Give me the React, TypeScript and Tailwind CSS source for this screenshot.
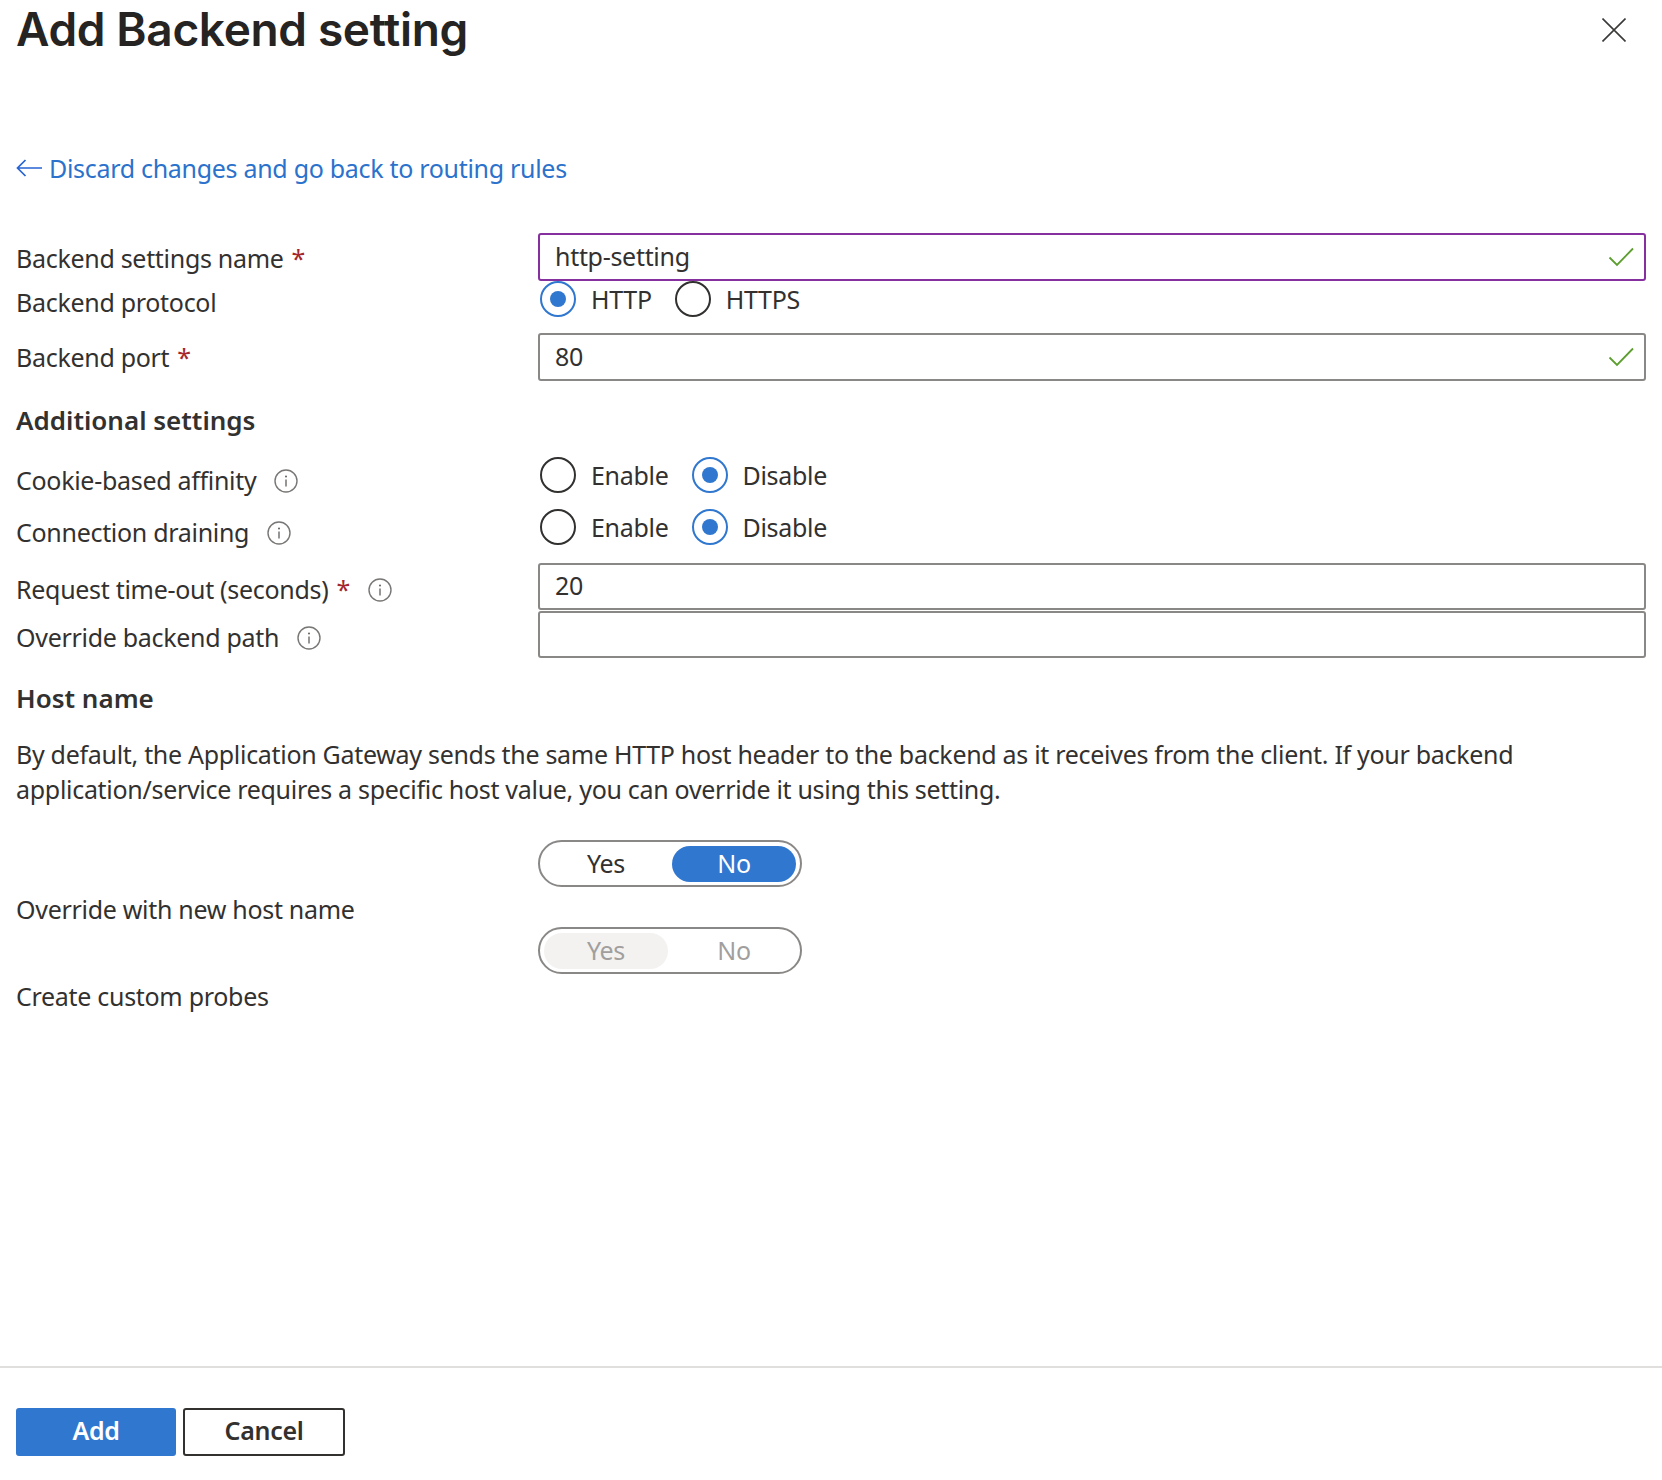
const bodyFont = "font-['Noto_Sans',sans-serif]";

function Required() {
  return <span className="ml-2 text-[#a4262c]">*</span>;
}

function InfoIcon() {
  return (
    <svg className="ml-[18px] shrink-0" width="24" height="24" viewBox="0 0 24 24" fill="none">
      <circle cx="12" cy="12" r="11" stroke="#797775" strokeWidth="1.4" />
      <path d="M12 10.5V17.5" stroke="#605e5c" strokeWidth="1.3" />
      <circle cx="12" cy="7.5" r="1" fill="#605e5c" />
    </svg>
  );
}

function CheckIcon() {
  return (
    <svg className="absolute right-[10px] top-[12px]" width="26" height="20" viewBox="0 0 26 20" fill="none">
      <path d="M1.5 10.5L9 18L25 1.5" stroke="#5c9e2f" strokeWidth="1.8" />
    </svg>
  );
}

function Radio({ label, checked }: { label: string; checked?: boolean }) {
  return (
    <div className="flex items-center gap-[15px]">
      <span
        className={
          checked
            ? "flex size-9 items-center justify-center rounded-full border-2 border-[#3077cf]"
            : "flex size-9 items-center justify-center rounded-full border-2 border-[#323130]"
        }
      >
        {checked && <span className="size-4 rounded-full bg-[#3077cf]" />}
      </span>
      <span>{label}</span>
    </div>
  );
}

function TextBox({ value, focused, valid }: { value?: string; focused?: boolean; valid?: boolean }) {
  return (
    <div
      className={
        focused
          ? "relative flex h-full w-[1108px] items-center rounded-[3px] border-2 border-[#862f9e] px-[15px]"
          : "relative flex h-full w-[1108px] items-center rounded-[3px] border-2 border-[#8a8886] px-[15px]"
      }
    >
      <span className="-translate-y-px">{value}</span>
      {valid && <CheckIcon />}
    </div>
  );
}

function Toggle({ selected, disabled }: { selected: "Yes" | "No"; disabled?: boolean }) {
  const base = "flex h-[36px] w-[124px] items-center justify-center rounded-full";
  return (
    <div className="flex h-[47px] w-[264px] items-center justify-between rounded-full border-2 border-[#8a8886] px-1">
      <div
        className={
          selected === "Yes"
            ? disabled
              ? base + " bg-[#f3f2f1] text-[#a19f9d]"
              : base + " bg-[#3077cf] text-white"
            : disabled
              ? base + " text-[#a19f9d]"
              : base
        }
      >
        Yes
      </div>
      <div
        className={
          selected === "No"
            ? disabled
              ? base + " bg-[#f3f2f1] text-[#a19f9d]"
              : base + " bg-[#3077cf] text-white"
            : disabled
              ? base + " text-[#a19f9d]"
              : base
        }
      >
        No
      </div>
    </div>
  );
}

export default function App() {
  return (
    <div className={`flex h-[1480px] w-[1662px] flex-col overflow-hidden bg-white text-[25px] leading-[35px] tracking-[-0.3px] text-[#323130] ${bodyFont}`}>
      <div className="flex h-[60px] items-center justify-between pl-4 pr-9">
        <h1 className="-translate-y-px font-['Inter',sans-serif] text-[46px] leading-[60px] font-semibold tracking-[-0.35px] text-[#252423]">
          Add Backend setting
        </h1>
        <svg width="24" height="24" viewBox="0 0 24 24" fill="none">
          <path d="M0.5 0.5L23.5 23.5M23.5 0.5L0.5 23.5" stroke="#3b3a39" strokeWidth="1.6" />
        </svg>
      </div>

      <div className="mt-[90px] flex h-[36px] items-center gap-[7px] px-4 text-[#2b72cc]">
        <svg width="26" height="18" viewBox="0 0 26 18" fill="none">
          <path d="M26 9H1.5M9.5 1L1.5 9L9.5 17" stroke="#2563d4" strokeWidth="1.7" />
        </svg>
        <span>Discard changes and go back to routing rules</span>
      </div>

      <div className="mt-[47px] flex h-[48px] px-4">
        <div className="flex w-[522px] items-center pt-[2px]">
          Backend settings name
          <Required />
        </div>
        <TextBox value="http-setting" focused valid />
      </div>

      <div className="flex h-[52px] px-4">
        <div className="flex w-[522px] items-center pb-[9px]">Backend protocol</div>
        <div className="flex h-[36px] items-center gap-[23px] pl-[2px]">
          <Radio label="HTTP" checked />
          <Radio label="HTTPS" />
        </div>
      </div>

      <div className="flex h-[48px] px-4">
        <div className="flex w-[522px] items-center pt-[1px]">
          Backend port
          <Required />
        </div>
        <TextBox value="80" valid />
      </div>

      <h2 className="mt-[22px] h-[36px] px-4 text-[26px] font-semibold tracking-normal">Additional settings</h2>

      <div className="mt-[18px] flex h-[36px] px-4">
        <div className="flex w-[522px] items-center pt-[11px]">
          Cookie-based affinity
          <InfoIcon />
        </div>
        <div className="flex items-center gap-[23px] pl-[2px]">
          <Radio label="Enable" />
          <Radio label="Disable" checked />
        </div>
      </div>

      <div className="mt-[16px] flex h-[36px] px-4">
        <div className="flex w-[522px] items-center pt-[11px]">
          Connection draining
          <InfoIcon />
        </div>
        <div className="flex items-center gap-[23px] pl-[2px]">
          <Radio label="Enable" />
          <Radio label="Disable" checked />
        </div>
      </div>

      <div className="mt-[18px] flex h-[47px] px-4">
        <div className="flex w-[522px] items-center pt-[6px]">
          Request time-out (seconds)
          <Required />
          <InfoIcon />
        </div>
        <TextBox value="20" />
      </div>

      <div className="mt-px flex h-[47px] px-4">
        <div className="flex w-[522px] items-center pt-[6px]">
          Override backend path
          <InfoIcon />
        </div>
        <TextBox />
      </div>

      <h2 className="mt-[23px] h-[36px] px-4 text-[26px] font-semibold tracking-normal">Host name</h2>

      <p className="mt-[20px] px-4">
        By default, the Application Gateway sends the same HTTP host header to the backend as it receives from the client. If your backend
        <br />
        application/service requires a specific host value, you can override it using this setting.
      </p>

      <div className="mt-[33px] flex h-[87px] px-4">
        <div className="flex w-[522px] items-end">Override with new host name</div>
        <Toggle selected="No" />
      </div>

      <div className="flex h-[87px] px-4">
        <div className="flex w-[522px] items-end">Create custom probes</div>
        <Toggle selected="Yes" disabled />
      </div>

      <div className="mt-auto flex h-[114px] gap-[7px] border-t-2 border-[#e1dfdd] px-4 pt-[40px] font-semibold">
        <button className="h-[48px] w-[160px] rounded-[3px] bg-[#3077cf] pb-[3px] text-white">Add</button>
        <button className="h-[48px] w-[162px] rounded-[3px] border-2 border-[#323130] pb-[3px]">Cancel</button>
      </div>
    </div>
  );
}
